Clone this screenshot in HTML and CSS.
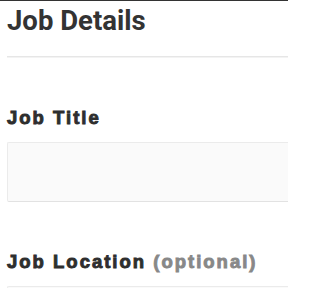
FILE: index.html
```html
<!DOCTYPE html>
<html>
<head>
<meta charset="utf-8">
<link rel="stylesheet" href="styles.css">
</head>
<body>
<div class="page">
  <h1 class="title">Job Details</h1>
  <div class="divider"></div>
  <div class="field">
    <label class="label">Job Title</label>
    <div class="input"></div>
  </div>
  <div class="field">
    <label class="label">Job Location <span class="optional">(optional)</span></label>
    <div class="input input-last"></div>
  </div>
</div>
</body>
</html>
```
FILE: styles.css
```css
html, body {
  margin: 0;
  padding: 0;
  background: #ffffff;
}
.page {
  box-sizing: border-box;
  width: 288px;
  height: 288px;
  overflow: hidden;
  border-top: 1px solid #333333;
  padding: 4px 0 0 7px;
}
.title {
  margin: 0;
  font-family: Roboto, "Liberation Sans", sans-serif;
  font-weight: 700;
  font-size: 27.5px;
  line-height: 32px;
  color: #333333;
}
.divider {
  margin-top: 19px;
  height: 1px;
  background: #e6e6e6;
  box-shadow: 0 1px 0 #f3f3f3;
}
.field {
  margin-top: 51px;
}
.field + .field {
  margin-top: 50px;
}
.label {
  display: block;
  font-family: "Liberation Sans", Arial, sans-serif;
  font-weight: 700;
  font-size: 18.5px;
  line-height: 20px;
  letter-spacing: 2px;
  color: #2e2e2e;
  -webkit-text-stroke: 0.9px #2e2e2e;
  margin-bottom: 14px;
}
.optional {
  color: #888888;
  -webkit-text-stroke: 0.9px #888888;
}
.input {
  height: 58px;
  background: #fafafa;
  border: 1px solid #ebebeb;
  border-right: none;
  border-bottom-color: #e2e2e2;
  border-radius: 2px 0 0 2px;
}
```
